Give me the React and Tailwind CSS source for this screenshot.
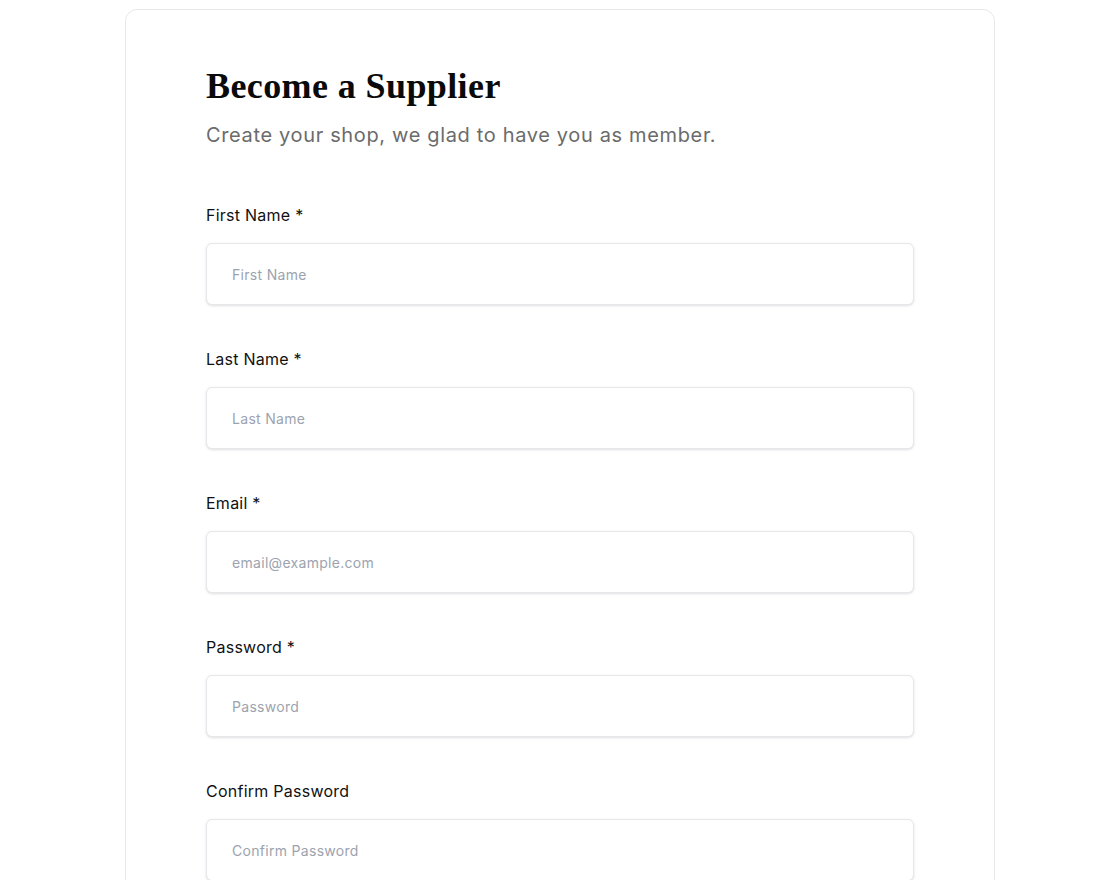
import React from "react";

const fields = [
  { label: "First Name *", placeholder: "First Name", type: "text" },
  { label: "Last Name *", placeholder: "Last Name", type: "text" },
  { label: "Email *", placeholder: "email@example.com", type: "email" },
  { label: "Password *", placeholder: "Password", type: "password" },
  { label: "Confirm Password", placeholder: "Confirm Password", type: "password" },
];

export default function App() {
  return (
    <div className="min-h-screen bg-white pt-[9px] font-['Inter',sans-serif]">
      <div className="mx-auto w-[870px] rounded-xl border border-[#e8e8e8] bg-white px-[80px] pt-[54px] pb-[80px]">
        <h1 className="font-['Liberation_Serif',serif] text-[36px] font-bold leading-[44px] tracking-[0.4px] text-[#0a0a0a]">
          Become a Supplier
        </h1>
        <p className="mt-[13px] text-[20px] leading-[28px] tracking-[0.65px] text-[#6b6b6b]">
          Create your shop, we glad to have you as member.
        </p>
        <div className="mt-[54px] flex flex-col gap-[42px]">
          {fields.map((f) => (
            <div key={f.label} className="flex flex-col gap-[16px]">
              <label className="text-[16px] leading-[24px] tracking-[0.25px] text-[#111111]">{f.label}</label>
              <input
                type={f.type}
                placeholder={f.placeholder}
                className="h-[62px] w-full rounded-md border border-[#e5e7eb] bg-white px-[25px] text-[14px] tracking-[0.3px] text-[#111] shadow-sm outline-none placeholder:text-[#9ca3af]"
              />
            </div>
          ))}
          <button className="h-[56px] w-full rounded-md bg-[#111] text-[16px] font-medium text-white">
            Create Account
          </button>
        </div>
      </div>
    </div>
  );
}
